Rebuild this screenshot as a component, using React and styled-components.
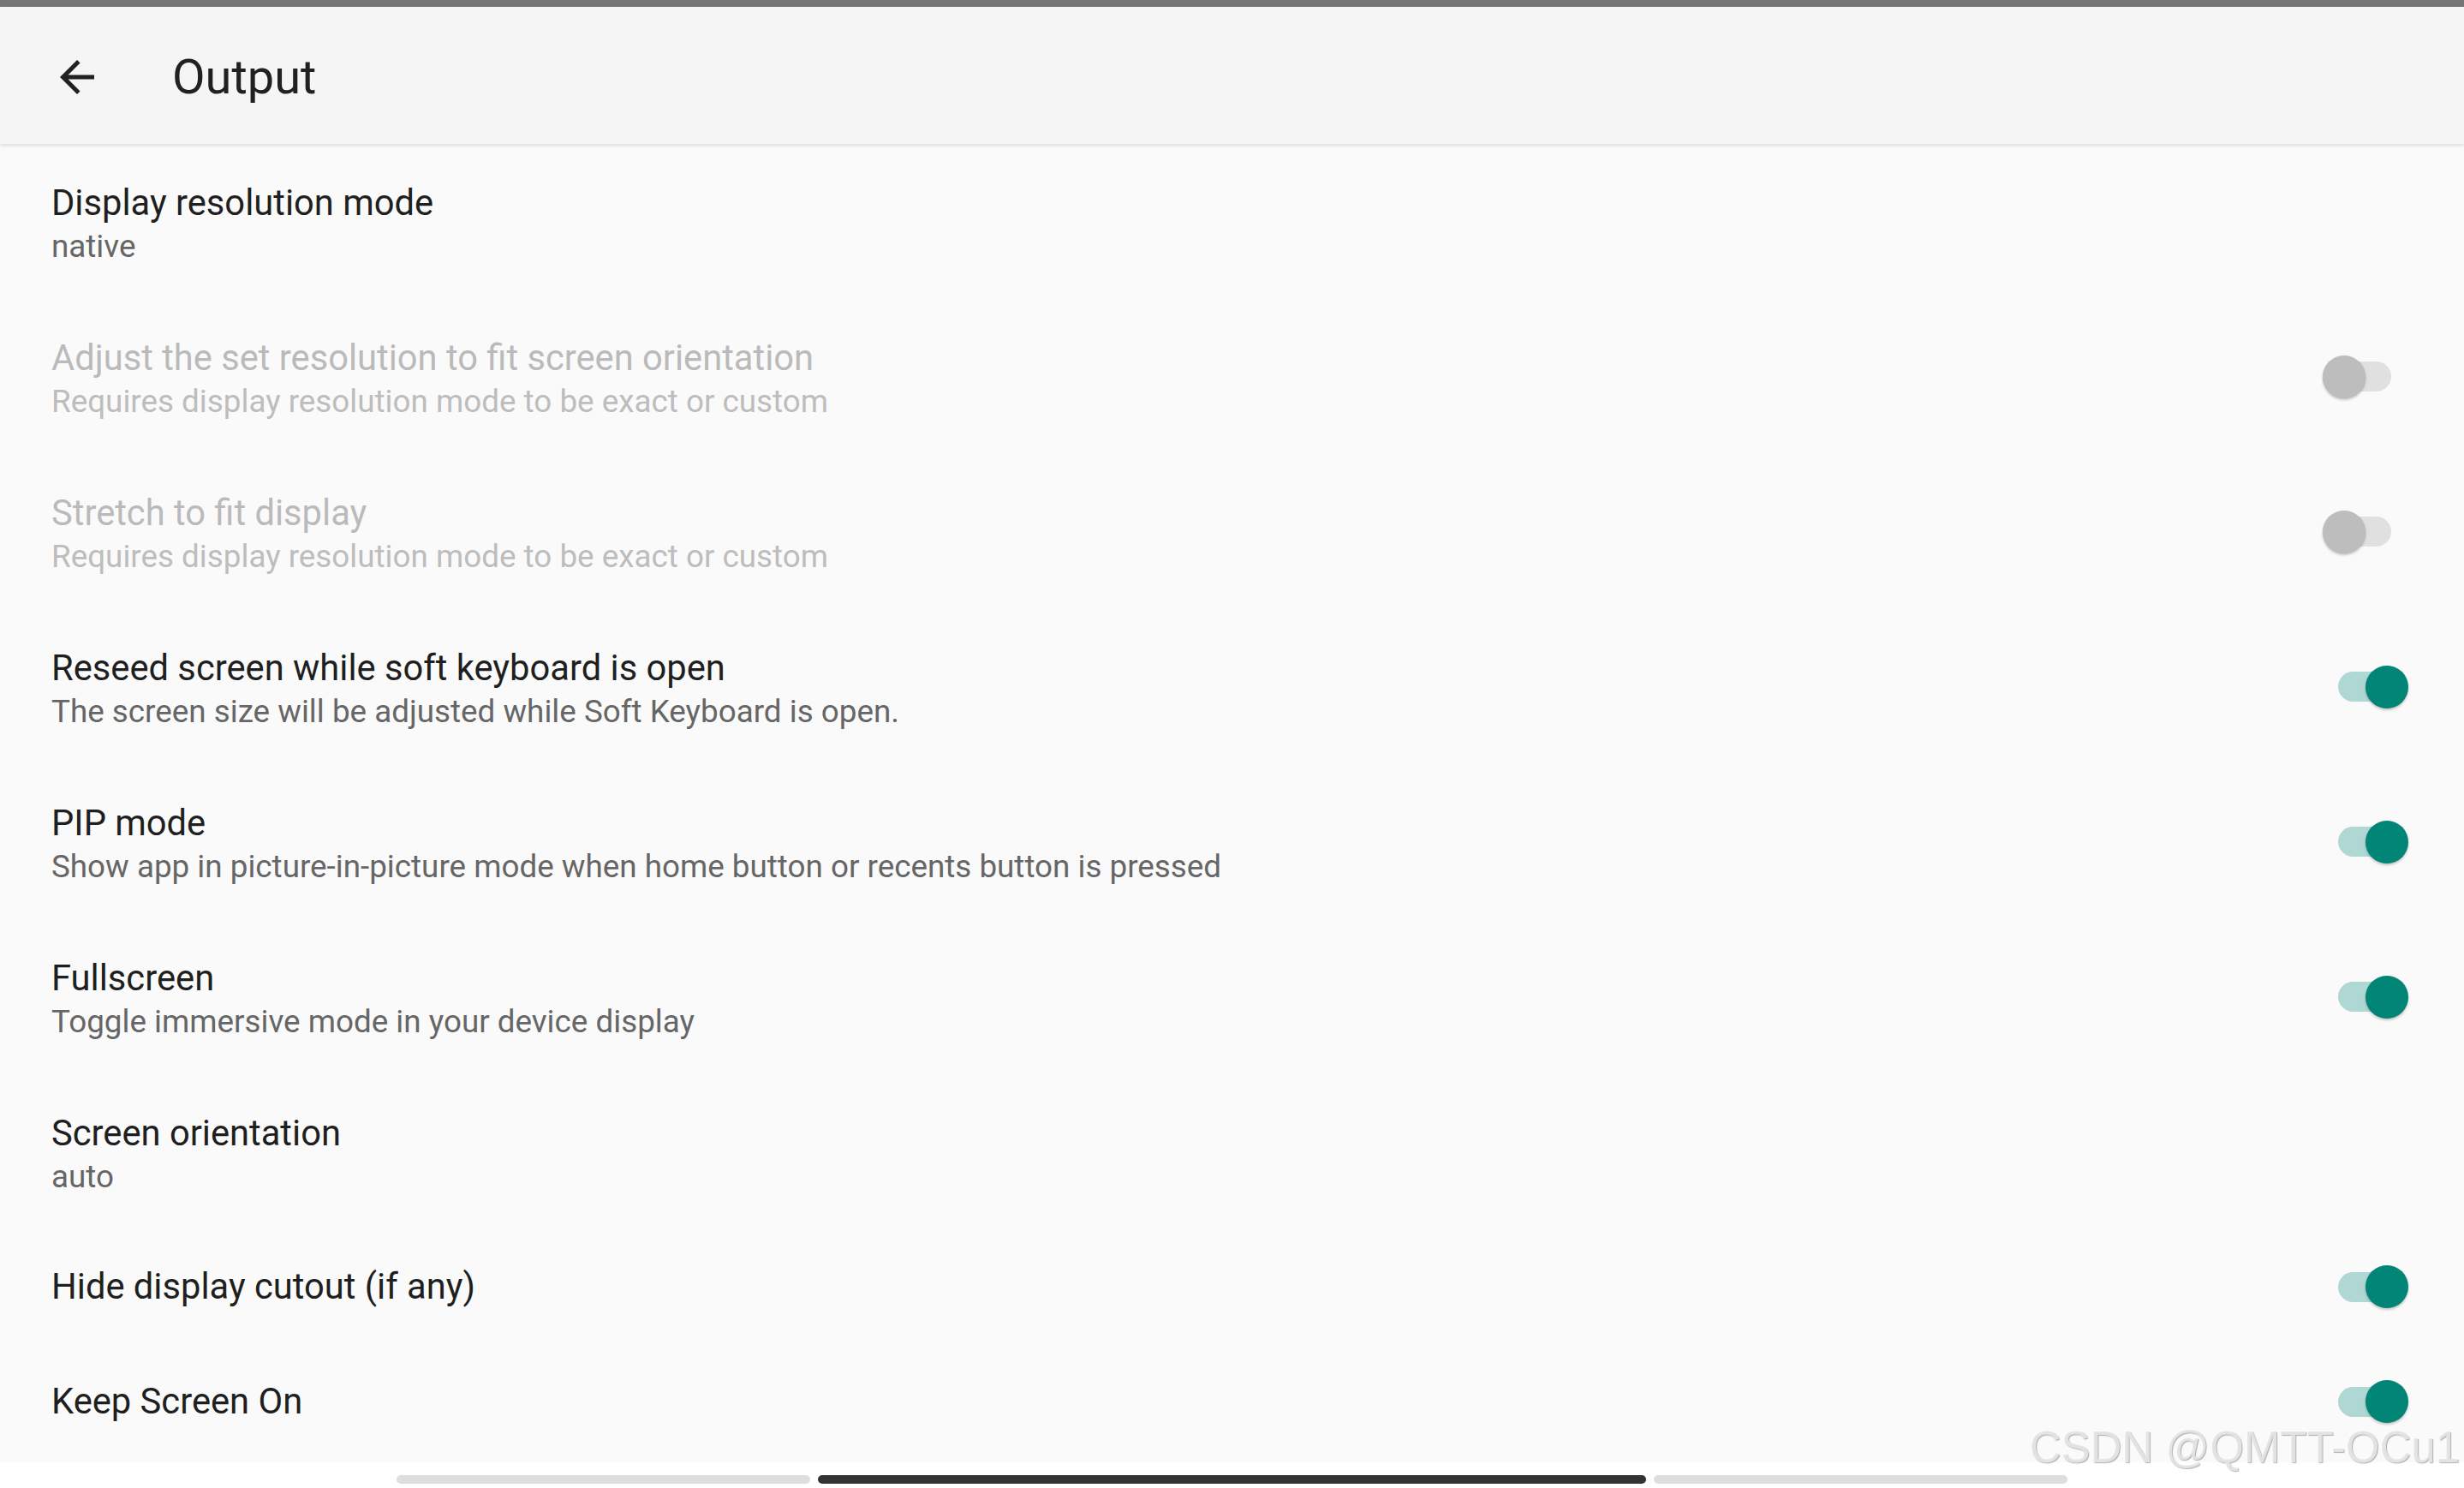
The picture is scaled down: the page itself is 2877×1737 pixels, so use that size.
import React from 'react';
import styled, { createGlobalStyle } from 'styled-components';

const GlobalStyle = createGlobalStyle`
    html, body {
        margin: 0;
        padding: 0;
        background: #fafafa;
    }
    body {
        font-family: Roboto, "Noto Sans", "Liberation Sans", sans-serif;
        -webkit-font-smoothing: antialiased;
    }
`;

const SUMMARY_EXACT = 'Requires display resolution mode to be exact or custom';

const prefs = [
    { title: 'Display resolution mode', summary: 'native' },
    { title: 'Adjust the set resolution to fit screen orientation', summary: SUMMARY_EXACT, toggle: false, disabled: true },
    { title: 'Stretch to fit display', summary: SUMMARY_EXACT, toggle: false, disabled: true },
    { title: 'Reseed screen while soft keyboard is open', summary: 'The screen size will be adjusted while Soft Keyboard is open.', toggle: true },
    { title: 'PIP mode', summary: 'Show app in picture-in-picture mode when home button or recents button is pressed', toggle: true },
    { title: 'Fullscreen', summary: 'Toggle immersive mode in your device display', toggle: true },
    { title: 'Screen orientation', summary: 'auto' },
    { title: 'Hide display cutout (if any)', toggle: true },
    { title: 'Keep Screen On', toggle: true },
];

function BackArrow() {
    return (
        <svg width="60" height="60" viewBox="0 0 24 24">
            <path fill="#212121" d="M20 11H7.83l5.59-5.59L12 4l-8 8 8 8 1.41-1.41L7.83 13H20v-2z" />
        </svg>
    );
}

function Switch({ on, disabled }) {
    return (
        <SwitchBox>
            <Track $on={on} $disabled={disabled} />
            <Thumb $on={on} $disabled={disabled} />
        </SwitchBox>
    );
}

function Preference({ title, summary, toggle, disabled }) {
    return (
        <Row $single={!summary}>
            <TextCol>
                <Title $disabled={disabled}>{title}</Title>
                {summary && <Summary $disabled={disabled}>{summary}</Summary>}
            </TextCol>
            {toggle !== undefined && <Switch on={toggle} disabled={disabled} />}
        </Row>
    );
}

function App() {
    return (
        <Screen>
            <GlobalStyle />
            <StatusStrip />
            <Toolbar>
                <BackButton>
                    <BackArrow />
                </BackButton>
                <ToolbarTitle>Output</ToolbarTitle>
            </Toolbar>
            <List>
                {prefs.map((p) => (
                    <Preference key={p.title} {...p} />
                ))}
            </List>
            <NavArea>
                <NavBar />
                <NavBar $active />
                <NavBar />
            </NavArea>
            <Watermark>CSDN @QMTT-OCu1</Watermark>
        </Screen>
    );
}

const Screen = styled.div`
    position: relative;
    width: 100vw;
    height: 100vh;
    display: flex;
    flex-direction: column;
    overflow: hidden;
    background: #fafafa;
`;

const StatusStrip = styled.div`
    height: 8px;
    flex: none;
    background: #757575;
`;

const Toolbar = styled.div`
    position: relative;
    z-index: 1;
    height: 160px;
    flex: none;
    box-sizing: border-box;
    padding: 3px 0 0 60px;
    display: flex;
    align-items: center;
    background: #f5f5f5;
    box-shadow: 0 2px 4px rgba(0, 0, 0, 0.12);
`;

const BackButton = styled.div`
    width: 60px;
    height: 60px;
    display: flex;
    align-items: center;
    justify-content: center;
`;

const ToolbarTitle = styled.div`
    margin-left: 81px;
    font-size: 56px;
    line-height: 1;
    color: #212121;
`;

const List = styled.div`
    flex: 1;
    display: flex;
    flex-direction: column;
    background: #fafafa;
`;

const Row = styled.div`
    height: ${(p) => (p.$single ? 134 : 181)}px;
    flex: none;
    box-sizing: border-box;
    padding: 0 65px 0 60px;
    display: flex;
    align-items: center;
`;

const TextCol = styled.div`
    flex: 1;
    display: flex;
    flex-direction: column;
`;

const Title = styled.div`
    font-size: 41.7px;
    line-height: 58px;
    color: ${(p) => (p.$disabled ? '#bababa' : '#1f1f1f')};
`;

const Summary = styled.div`
    font-size: 36.8px;
    line-height: 44px;
    color: ${(p) => (p.$disabled ? '#bdbdbd' : '#666666')};
`;

const SwitchBox = styled.div`
    position: relative;
    width: 100px;
    height: 50px;
    flex: none;
`;

const Track = styled.div`
    position: absolute;
    left: 18px;
    top: 7.5px;
    width: 62px;
    height: 35px;
    border-radius: 17.5px;
    background: ${(p) => (p.$on ? '#afd7d3' : '#e0e0e0')};
`;

const Thumb = styled.div`
    position: absolute;
    top: 0;
    left: ${(p) => (p.$on ? 50 : 0)}px;
    width: 50px;
    height: 50px;
    border-radius: 50%;
    background: ${(p) => (p.$on ? '#008577' : '#bdbdbd')};
    box-shadow: 0 2px 3px rgba(0, 0, 0, 0.22), 0 0 1px rgba(0, 0, 0, 0.12);
`;

const NavArea = styled.div`
    height: 30px;
    flex: none;
    box-sizing: border-box;
    padding-top: 15px;
    display: flex;
    justify-content: center;
    gap: 9px;
    background: #ffffff;
`;

const NavBar = styled.div`
    width: ${(p) => (p.$active ? 967 : 483)}px;
    height: 10px;
    border-radius: 5px;
    background: ${(p) => (p.$active ? '#333333' : '#dedede')};
`;

const Watermark = styled.div`
    position: absolute;
    right: 5px;
    bottom: 22px;
    z-index: 2;
    font-family: "Liberation Sans", Arial, sans-serif;
    font-size: 51px;
    line-height: 1;
    color: rgba(230, 230, 230, 0.92);
    text-shadow: 1px 1px 1px rgba(0, 0, 0, 0.3), -1px -1px 0 rgba(255, 255, 255, 0.6);
    white-space: nowrap;
`;

export default App;
